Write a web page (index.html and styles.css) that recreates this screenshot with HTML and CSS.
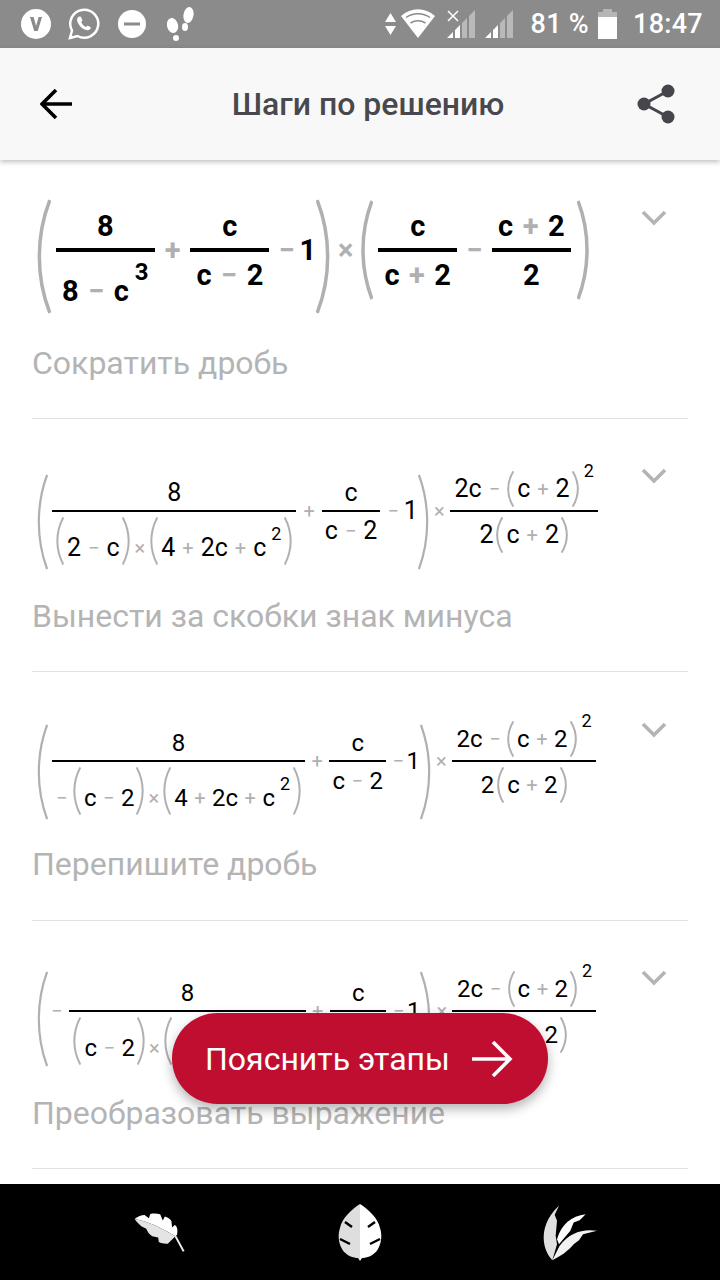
FILE: index.html
```html
<!DOCTYPE html>
<html lang="ru">
<head>
    <meta charset="UTF-8">
    <meta name="viewport" content="width=device-width, initial-scale=1.0">
    <title>Шаги по решению</title>
    <link rel="stylesheet" href="styles.css">
</head>
<body>
    <svg class="defs" aria-hidden="true">
        <symbol id="paren-l" viewBox="0 0 12 100" preserveAspectRatio="none"><path d="M11 1C-1 32-1 68 11 99" vector-effect="non-scaling-stroke"/></symbol>
        <symbol id="paren-r" viewBox="0 0 12 100" preserveAspectRatio="none"><path d="M1 1C13 32 13 68 1 99" vector-effect="non-scaling-stroke"/></symbol>
        <symbol id="chevron" viewBox="0 0 26 16"><path d="M2 2l11 11L24 2"/></symbol>
        <symbol id="signal" viewBox="0 0 28 28"><path class="bar-off" d="M15 28V13l5-5v20zM22 28V6l6-6v28z"/><path class="bar-on" d="M0 28l6-6v6zM8 28v-8l5-5v13z"/></symbol>
    </svg>

    <div class="app">
        <div class="status-bar">
            <div class="status-left">
                <svg class="ico-v" viewBox="0 0 30 30"><circle cx="15" cy="15" r="15" fill="#fff"/><path d="M9 8h3.600l2.500 9 2.500-9H21l-4.200 14h-3.600z" fill="#8b8b8b"/></svg>
                <svg class="ico-wa" viewBox="0 0 32 32"><path d="M2 30l2-7.500A14 14 0 1 1 9.500 28z" fill="none" stroke="#fff" stroke-width="2.500"/><path d="M11 8.500c-2 1-2.500 3-1.500 5.500 1.500 3.500 4.500 7 8.500 8 2.500.6 4.500-.5 5-2.500l-3.500-2-1.500 1.500c-2-.8-4-3-4.800-5l1.300-1.500-1.600-3.800z" fill="#fff"/></svg>
                <svg class="ico-dnd" viewBox="0 0 28 28"><circle cx="14" cy="14" r="14" fill="#fff"/><rect x="6" y="12.500" width="16" height="3" fill="#8b8b8b"/></svg>
                <svg class="ico-feet" viewBox="0 0 27 34"><ellipse cx="21.500" cy="8" rx="5" ry="8" fill="#fff" transform="rotate(10 21.500 8)"/><ellipse cx="18" cy="20" rx="3" ry="4" fill="#fff"/><ellipse cx="5.500" cy="18.500" rx="5.500" ry="7.500" fill="#fff" transform="rotate(-15 5.500 18.500)"/><ellipse cx="9" cy="31" rx="3" ry="3" fill="#fff"/></svg>
            </div>
            <div class="status-right">
                <svg class="ico-updown" viewBox="0 0 11 22"><path d="M5.500 0L11 9H0zM0 13h11l-5.500 9z" fill="#fff"/></svg>
                <svg class="ico-wifi" viewBox="0 0 34 29"><path d="M17 29L0 7C10-2 24-2 34 7z" fill="#fff"/><path d="M5 8.500c7-5 17-5 24 0M9.500 14c5-3 10-3 15 0" fill="none" stroke="#8b8b8b" stroke-width="1.500"/></svg>
                <div class="signal-wrap">
                    <svg class="ico-signal"><use href="#signal"/></svg>
                    <svg class="ico-x" viewBox="0 0 12 12"><path d="M1 1l10 10M11 1L1 11" stroke="#fff" stroke-width="1.500"/></svg>
                </div>
                <svg class="ico-signal second"><use href="#signal"/></svg>
                <span class="battery-text">81 %</span>
                <svg class="ico-battery" viewBox="0 0 19 30"><path d="M5 0h9v3H5z" fill="#b5b5b5"/><path d="M0 3h19v5H0z" fill="#b5b5b5"/><path d="M0 8h19v22H0z" fill="#fff"/></svg>
                <span class="clock">18:47</span>
            </div>
        </div>

        <header class="top-bar">
            <svg class="ico-back" viewBox="0 0 32 32"><path d="M32 16H3M16 2L2 16l14 14" fill="none" stroke="#000" stroke-width="3.600"/></svg>
            <h1 class="title">Шаги по решению</h1>
            <svg class="ico-share" viewBox="0 0 38 40"><path d="M31 7L7 20l24 13" fill="none" stroke="#45454b" stroke-width="3"/><circle cx="31" cy="7" r="6.500" fill="#45454b"/><circle cx="7" cy="20" r="6.500" fill="#45454b"/><circle cx="31" cy="33" r="6.500" fill="#45454b"/></svg>
        </header>

        <main class="steps">
            <section class="step step-1">
                <div class="step-head">
                    <div class="math math-lg">
                        <svg class="paren paren-big lp"><use href="#paren-l"/></svg>
                        <div class="frac">
                            <div class="num">8</div>
                            <div class="bar"></div>
                            <div class="den den-pow">
                                <span>8</span><span class="op">−</span><span>c</span><span class="sup">3</span>
                            </div>
                        </div>
                        <span class="op plus">+</span>
                        <div class="frac">
                            <div class="num">c</div>
                            <div class="bar"></div>
                            <div class="den"><span>c</span><span class="op">−</span><span>2</span></div>
                        </div>
                        <span class="op">−</span>
                        <span class="one">1</span>
                        <svg class="paren paren-big"><use href="#paren-r"/></svg>
                        <span class="op times">×</span>
                        <svg class="paren paren-second lp"><use href="#paren-l"/></svg>
                        <div class="frac">
                            <div class="num">c</div>
                            <div class="bar"></div>
                            <div class="den"><span>c</span><span class="op">+</span><span>2</span></div>
                        </div>
                        <span class="op">−</span>
                        <div class="frac">
                            <div class="num"><span>c</span><span class="op">+</span><span>2</span></div>
                            <div class="bar"></div>
                            <div class="den">2</div>
                        </div>
                        <svg class="paren paren-second rp"><use href="#paren-r"/></svg>
                    </div>
                    <svg class="chevron"><use href="#chevron"/></svg>
                </div>
                <p class="caption">Сократить дробь</p>
            </section>

            <section class="step step-2">
                <div class="step-head">
                    <div class="math math-md">
                        <svg class="paren paren-big lp"><use href="#paren-l"/></svg>
                        <div class="frac">
                            <div class="num">8</div>
                            <div class="bar"></div>
                            <div class="den den-tall">
                                <svg class="paren paren-mid lp"><use href="#paren-l"/></svg>
                                <span>2</span><span class="op">−</span><span>c</span>
                                <svg class="paren paren-mid rp"><use href="#paren-r"/></svg>
                                <span class="op times">×</span>
                                <svg class="paren paren-mid lp"><use href="#paren-l"/></svg>
                                <span>4</span><span class="op">+</span><span>2c</span><span class="op">+</span><span>c</span><span class="sup">2</span>
                                <svg class="paren paren-mid rp"><use href="#paren-r"/></svg>
                            </div>
                        </div>
                        <span class="op">+</span>
                        <div class="frac">
                            <div class="num">c</div>
                            <div class="bar"></div>
                            <div class="den"><span>c</span><span class="op">−</span><span>2</span></div>
                        </div>
                        <span class="op">−</span>
                        <span class="one">1</span>
                        <svg class="paren paren-big"><use href="#paren-r"/></svg>
                        <span class="op times">×</span>
                        <div class="frac">
                            <div class="num num-pow">
                                <span>2c</span><span class="op">−</span>
                                <svg class="paren paren-sm lp"><use href="#paren-l"/></svg>
                                <span>c</span><span class="op">+</span><span>2</span>
                                <svg class="paren paren-sm rp"><use href="#paren-r"/></svg>
                                <span class="sup">2</span>
                            </div>
                            <div class="bar"></div>
                            <div class="den den-paren">
                                <span>2</span>
                                <svg class="paren paren-sm lp"><use href="#paren-l"/></svg>
                                <span>c</span><span class="op">+</span><span>2</span>
                                <svg class="paren paren-sm rp"><use href="#paren-r"/></svg>
                            </div>
                        </div>
                    </div>
                    <svg class="chevron"><use href="#chevron"/></svg>
                </div>
                <p class="caption">Вынести за скобки знак минуса</p>
            </section>

            <section class="step step-3">
                <div class="step-head">
                    <div class="math math-md">
                        <svg class="paren paren-big lp"><use href="#paren-l"/></svg>
                        <div class="frac">
                            <div class="num">8</div>
                            <div class="bar"></div>
                            <div class="den den-tall">
                                <span class="op">−</span>
                                <svg class="paren paren-mid lp"><use href="#paren-l"/></svg>
                                <span>c</span><span class="op">−</span><span>2</span>
                                <svg class="paren paren-mid rp"><use href="#paren-r"/></svg>
                                <span class="op times">×</span>
                                <svg class="paren paren-mid lp"><use href="#paren-l"/></svg>
                                <span>4</span><span class="op">+</span><span>2c</span><span class="op">+</span><span>c</span><span class="sup">2</span>
                                <svg class="paren paren-mid rp"><use href="#paren-r"/></svg>
                            </div>
                        </div>
                        <span class="op">+</span>
                        <div class="frac">
                            <div class="num">c</div>
                            <div class="bar"></div>
                            <div class="den"><span>c</span><span class="op">−</span><span>2</span></div>
                        </div>
                        <span class="op">−</span>
                        <span class="one">1</span>
                        <svg class="paren paren-big"><use href="#paren-r"/></svg>
                        <span class="op times">×</span>
                        <div class="frac">
                            <div class="num num-pow">
                                <span>2c</span><span class="op">−</span>
                                <svg class="paren paren-sm lp"><use href="#paren-l"/></svg>
                                <span>c</span><span class="op">+</span><span>2</span>
                                <svg class="paren paren-sm rp"><use href="#paren-r"/></svg>
                                <span class="sup">2</span>
                            </div>
                            <div class="bar"></div>
                            <div class="den den-paren">
                                <span>2</span>
                                <svg class="paren paren-sm lp"><use href="#paren-l"/></svg>
                                <span>c</span><span class="op">+</span><span>2</span>
                                <svg class="paren paren-sm rp"><use href="#paren-r"/></svg>
                            </div>
                        </div>
                    </div>
                    <svg class="chevron"><use href="#chevron"/></svg>
                </div>
                <p class="caption">Перепишите дробь</p>
            </section>

            <section class="step step-4">
                <div class="step-head">
                    <div class="math math-md">
                        <svg class="paren paren-big"><use href="#paren-l"/></svg>
                        <span class="op lead-minus">−</span>
                        <div class="frac">
                            <div class="num">8</div>
                            <div class="bar"></div>
                            <div class="den den-tall">
                                <svg class="paren paren-mid lp"><use href="#paren-l"/></svg>
                                <span>c</span><span class="op">−</span><span>2</span>
                                <svg class="paren paren-mid rp"><use href="#paren-r"/></svg>
                                <span class="op times">×</span>
                                <svg class="paren paren-mid lp"><use href="#paren-l"/></svg>
                                <span>4</span><span class="op">+</span><span>2c</span><span class="op">+</span><span>c</span><span class="sup">2</span>
                                <svg class="paren paren-mid rp"><use href="#paren-r"/></svg>
                            </div>
                        </div>
                        <span class="op">+</span>
                        <div class="frac">
                            <div class="num">c</div>
                            <div class="bar"></div>
                            <div class="den"><span>c</span><span class="op">−</span><span>2</span></div>
                        </div>
                        <span class="op">−</span>
                        <span class="one">1</span>
                        <svg class="paren paren-big"><use href="#paren-r"/></svg>
                        <span class="op times">×</span>
                        <div class="frac">
                            <div class="num num-pow">
                                <span>2c</span><span class="op">−</span>
                                <svg class="paren paren-sm lp"><use href="#paren-l"/></svg>
                                <span>c</span><span class="op">+</span><span>2</span>
                                <svg class="paren paren-sm rp"><use href="#paren-r"/></svg>
                                <span class="sup">2</span>
                            </div>
                            <div class="bar"></div>
                            <div class="den den-paren">
                                <span>2</span>
                                <svg class="paren paren-sm lp"><use href="#paren-l"/></svg>
                                <span>c</span><span class="op">+</span><span>2</span>
                                <svg class="paren paren-sm rp"><use href="#paren-r"/></svg>
                            </div>
                        </div>
                    </div>
                    <svg class="chevron"><use href="#chevron"/></svg>
                </div>
                <p class="caption">Преобразовать выражение</p>
            </section>
        </main>

        <button class="explain-btn">
            <span>Пояснить этапы</span>
            <svg class="ico-next" viewBox="0 0 41 38"><path d="M0 19h38M21 2l17 17-17 17" fill="none" stroke="#fff" stroke-width="3.600"/></svg>
        </button>

        <nav class="bottom-nav">
            <svg class="leaf-one" viewBox="100 100 160 125">
                <path d="M105 120C115 112 125 108 135 108L148 118 152 105C162 103 172 103 182 106L190 125 196 113C205 115 212 120 216 126L218 146 226 138C233 142 236 150 233 168L228 172C190 150 150 128 105 120z" fill="#fff"/>
                <path d="M105 120C150 128 190 150 228 172L205 195C195 196 185 194 178 190L176 176 158 172C150 168 144 160 140 150L125 142C118 135 110 128 105 120z" fill="#e4e4e4"/>
                <path d="M228 172L253 218" fill="none" stroke="#eee" stroke-width="6"/>
            </svg>
            <svg class="leaf-two" viewBox="0 0 44 57">
                <path d="M22 0C14 5 4 14 2 24C0 30 0 38 4 45C8 52 16 54 20 54L22 57z" fill="#dedede"/>
                <path d="M22 0C30 5 40 14 42 24C44 30 44 38 40 45C36 52 28 54 24 54L22 57z" fill="#fff"/>
                <path d="M7 18l7 5M2 35l10 5M37 18l-7 5M42 35l-10 5" fill="none" stroke="#000" stroke-width="2.500"/>
            </svg>
            <svg class="leaf-three" viewBox="130 70 165 170">
                <path d="M178 75C155 95 132 130 132 170C132 200 145 225 158 238L172 190 168 165 172 120 165 102z" fill="#e0e0e0"/>
                <path d="M258 100C215 105 185 130 172 175L178 190 212 150 222 125 240 118z" fill="#fff"/>
                <path d="M292 150C250 143 210 155 180 195L158 238C185 225 205 210 222 190L238 178 250 160z" fill="#f2f2f2"/>
            </svg>
        </nav>
    </div>
</body>
</html>
```

FILE: styles.css
```css
* {
    box-sizing: border-box;
}

body {
    margin: 0;
    font-family: Roboto, "Noto Sans", sans-serif;
    background-color: #fff;
}

.defs {
    position: absolute;
    width: 0;
    height: 0;
}

.app {
    position: relative;
    display: flex;
    flex-direction: column;
    width: 720px;
    height: 1280px;
    overflow: hidden;
}

/* status bar */
.status-bar {
    display: flex;
    justify-content: space-between;
    align-items: center;
    flex: none;
    height: 48px;
    padding: 0 17px 0 21px;
    background-color: #8b8b8b;
    color: #fff;
}

.status-left,
.status-right {
    display: flex;
    align-items: center;
}

.status-bar svg {
    display: block;
    flex: none;
}

.ico-v { width: 30px; height: 30px; }
.ico-wa { width: 32px; height: 32px; margin-left: 17px; }
.ico-dnd { width: 28px; height: 28px; margin-left: 18px; }
.ico-feet { width: 27px; height: 34px; margin-left: 21px; }
.ico-updown { width: 11px; height: 22px; }
.ico-wifi { width: 34px; height: 29px; margin-left: 5px; margin-bottom: 1px; }
.ico-signal { width: 28px; height: 28px; }
.ico-signal.second { margin-left: 10px; }
.ico-battery { width: 19px; height: 30px; margin-left: 9px; }

.signal-wrap {
    position: relative;
    margin-left: 12px;
}

.ico-x {
    position: absolute;
    left: 0;
    top: 0;
    width: 12px;
    height: 12px;
}

.bar-on { fill: #fff; }
.bar-off { fill: #b9b9b9; }

.battery-text,
.clock {
    font-size: 27px;
    font-weight: 500;
    letter-spacing: 0.3px;
}

.battery-text { margin-left: 18px; }
.clock { margin-left: 16px; }

/* header */
.top-bar {
    display: flex;
    justify-content: space-between;
    align-items: center;
    position: relative;
    z-index: 2;
    flex: none;
    height: 112px;
    padding: 0 45px 0 40px;
    background-color: #f8f8f8;
    box-shadow: 0 2px 5px rgba(0, 0, 0, 0.25);
}

.ico-back { width: 32px; height: 32px; }
.ico-share { width: 38px; height: 40px; }

.title {
    margin: 0 0 0 27px;
    font-size: 32px;
    font-weight: 500;
    color: #48484e;
}

/* steps */
.steps {
    flex: 1;
    min-height: 0;
    overflow: hidden;
}

.step {
    margin: 0 32px;
    border-bottom: 1px solid #e2e2e2;
}

.step-1 { height: 259px; padding-top: 25px; }
.step-2 { height: 253px; padding-top: 33px; }
.step-3 { height: 249px; padding-top: 30px; }
.step-4 { height: 248px; padding-top: 34px; }

.step-head {
    display: flex;
    justify-content: space-between;
    align-items: flex-start;
}

.chevron {
    flex: none;
    width: 26px;
    height: 16px;
    margin-right: 21px;
    fill: none;
    stroke: #b4b4b4;
    stroke-width: 3.600px;
}

.step-1 .chevron { margin-top: 25px; }
.step-2 .chevron { margin-top: 16px; }
.step-3 .chevron { margin-top: 20px; }
.step-4 .chevron { margin-top: 15px; }

.caption {
    margin: 0;
    font-size: 32px;
    line-height: 34px;
    color: #b4b4b4;
}

.step-1 .caption { margin-top: 32px; }
.step-2 .caption { margin-top: 29px; }
.step-3 .caption { margin-top: 27px; }
.step-4 .caption { margin-top: 29px; }

/* math */
.math {
    display: flex;
    align-items: center;
    margin-left: 5px;
    color: #000;
    white-space: nowrap;
}

.math-lg {
    font-size: 29px;
    font-weight: 700;
    line-height: 30px;
}

.math-md {
    font-size: 25px;
    line-height: 24px;
}

.step-3 .math-md,
.step-4 .math-md {
    font-size: 24px;
}

.frac {
    display: grid;
    grid-template-rows: 1fr auto 1fr;
    justify-items: center;
    flex: none;
}

.bar {
    justify-self: stretch;
    background-color: #000;
}

.num,
.den {
    display: flex;
    align-items: center;
}

.num { align-self: end; }
.den { align-self: start; }

.math-lg .bar { height: 4px; }
.math-lg .num { margin-bottom: 7px; padding: 0 6px; }
.math-lg .den { margin-top: 8px; padding: 0 6px; }

.math-md .bar { height: 2px; }
.math-md .num { margin-bottom: 5px; padding: 0 4px; }
.math-md .den { margin-top: 7px; padding: 0 3px; }

.op {
    color: #b0b0b0;
    font-weight: 400;
}

.math-lg .op {
    margin-left: 9.500px;
    margin-right: 9.500px;
    font-size: 29px;
    font-weight: 700;
}

.math-lg .op.plus {
    margin-left: 10px;
    margin-right: 10px;
}

.math-lg .num .op,
.math-lg .den .op {
    margin-left: 9.500px;
    margin-right: 9.500px;
}

.math-md .op {
    margin-left: 7px;
    margin-right: 7px;
    font-size: 20px;
}

.step-3 .math-md .op,
.step-4 .math-md .op {
    margin-left: 6.500px;
    margin-right: 6.500px;
}

.math .op.times { margin-left: 5px; margin-right: 5px; }
.math-lg .op.times { margin-left: 8px; margin-right: 8px; }
.step-3 .den-tall .op.times,
.step-4 .den-tall .op.times { margin-left: 4px; margin-right: 4px; }

.math-lg .one { margin-left: -5px; }
.math-md .one { margin-left: -2px; }
.step-3 .math-md .one,
.step-4 .math-md .one { margin-left: -4px; }

/* the big bracket hangs lower than the fraction bar, the margin keeps the bar in the row centre */
.paren {
    display: block;
    flex: none;
    fill: none;
    stroke: #b0b0b0;
}

.math-lg .paren-big { width: 14px; height: 115px; margin-top: 14px; stroke-width: 3.500px; }
.math-md .paren-big { width: 11px; height: 96px; margin-top: 22px; stroke-width: 2.200px; }
.step-4 .math-md .paren-big { margin-top: 16px; }

.paren-second { width: 12px; height: 100px; stroke-width: 3.500px; }
.paren-mid { width: 8px; height: 48px; stroke-width: 2px; }
.paren-sm { width: 7px; height: 36px; stroke-width: 2px; }

.math .lp { margin-right: 3px; }
.math .rp { margin-left: 2px; }
.math .paren-big.lp { margin-right: 4px; }
.math-lg .paren-big.lp,
.math-lg .paren-second.lp { margin-right: 5px; }
.math-lg .paren-second.rp { margin-left: 6px; }
.math .den-paren .lp { margin-left: 3px; }

.step-4 .math-md .lead-minus { margin-left: 3px; margin-right: 7px; }

.sup {
    font-size: 18px;
    line-height: 18px;
}

.math-lg .sup {
    font-size: 24px;
    line-height: 24px;
    margin-left: 6px;
}

/* rows with a power: base text sits below the middle, exponent above it */
.math-lg .den-pow {
    height: 54px;
    margin-top: 2px;
}

.den-pow > span { margin-top: 20px; }
.den-pow > .sup { margin-top: 0; margin-bottom: 18px; }

.math-md .den-tall { margin-top: 5px; padding: 0 4px; }
.den-tall > span { margin-top: 14px; }
.den-tall > .sup { margin: 0 1px 14px 5px; }

.math-md .den-paren { margin-top: 5px; }

.math-md .num-pow {
    height: 36px;
    margin-bottom: 3px;
    padding: 0 4px 0 5px;
}

.num-pow > .sup {
    margin-left: 5px;
    margin-bottom: 36px;
}

.step-3 .math-md .den-tall > .op:first-child { margin-left: 0; margin-right: 5.500px; }

/* floating button */
.explain-btn {
    position: absolute;
    left: 172px;
    top: 1013px;
    z-index: 3;
    display: flex;
    justify-content: space-between;
    align-items: center;
    width: 376px;
    height: 91px;
    padding: 0 35px 0 33px;
    border: none;
    border-radius: 46px;
    background-color: #c00e31;
    color: #fff;
    font-family: inherit;
    font-size: 32px;
    box-shadow: 0 5px 12px rgba(0, 0, 0, 0.3);
}

.ico-next { width: 41px; height: 38px; }

/* bottom nav */
.bottom-nav {
    display: flex;
    align-items: center;
    flex: none;
    height: 96px;
    background-color: #000;
}

.leaf-one { width: 53px; height: 42px; margin-left: 133px; margin-top: 1px; }
.leaf-two { width: 44px; height: 57px; margin-left: 152px; }
.leaf-three { width: 55px; height: 57px; margin-left: 161px; }
```
